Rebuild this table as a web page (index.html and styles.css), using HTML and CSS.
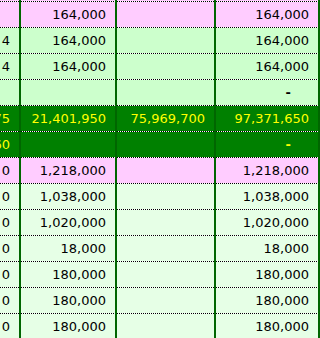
FILE: index.html
```html
<!DOCTYPE html>
<html>
<head>
<meta charset="utf-8">
<link rel="stylesheet" href="styles.css">
</head>
<body>
<div class="sheet">
  <div class="row pink edge"><div class="c c0"></div><div class="c c1"></div><div class="c c2"></div><div class="c c3"></div></div>
  <div class="row pink"><div class="c c0"></div><div class="c c1">164,000</div><div class="c c2"></div><div class="c c3">164,000</div></div>
  <div class="row mint"><div class="c c0">4</div><div class="c c1">164,000</div><div class="c c2"></div><div class="c c3">164,000</div></div>
  <div class="row mint"><div class="c c0">4</div><div class="c c1">164,000</div><div class="c c2"></div><div class="c c3">164,000</div></div>
  <div class="row mint"><div class="c c0"></div><div class="c c1"></div><div class="c c2"></div><div class="c c3"><span class="dash">-</span></div></div>
  <div class="row total"><div class="c c0">75,969,775</div><div class="c c1">21,401,950</div><div class="c c2">75,969,700</div><div class="c c3">97,371,650</div></div>
  <div class="row total"><div class="c c0">1,560</div><div class="c c1"></div><div class="c c2"></div><div class="c c3"><span class="dash">-</span></div></div>
  <div class="row pink"><div class="c c0">0</div><div class="c c1">1,218,000</div><div class="c c2"></div><div class="c c3">1,218,000</div></div>
  <div class="row pale"><div class="c c0">0</div><div class="c c1">1,038,000</div><div class="c c2"></div><div class="c c3">1,038,000</div></div>
  <div class="row pale"><div class="c c0">0</div><div class="c c1">1,020,000</div><div class="c c2"></div><div class="c c3">1,020,000</div></div>
  <div class="row pale"><div class="c c0">0</div><div class="c c1">18,000</div><div class="c c2"></div><div class="c c3">18,000</div></div>
  <div class="row pale"><div class="c c0">0</div><div class="c c1">180,000</div><div class="c c2"></div><div class="c c3">180,000</div></div>
  <div class="row pale"><div class="c c0">0</div><div class="c c1">180,000</div><div class="c c2"></div><div class="c c3">180,000</div></div>
  <div class="row pale"><div class="c c0">0</div><div class="c c1">180,000</div><div class="c c2"></div><div class="c c3">180,000</div></div>
</div>
</body>
</html>
```
FILE: styles.css
```css
html, body {
  margin: 0;
  padding: 0;
  background: #fff;
}
.sheet {
  width: 320px;
  height: 338px;
  overflow: hidden;
  font-family: "DejaVu Sans", Verdana, sans-serif;
  font-size: 13px;
}
.row {
  display: grid;
  grid-template-columns: 21px 96px 99px 104px;
  height: 26px;
}
.row.edge {
  height: 2px;
}
.c {
  --bg: #fff;
  display: flex;
  align-items: center;
  justify-content: flex-end;
  overflow: hidden;
  white-space: nowrap;
  padding: 0 9px 1px 0;
  border-right: 2px solid #006600;
  background:
    repeating-linear-gradient(90deg, #000 0 1px, #fff 1px 2px) left bottom / 100% 1px no-repeat,
    var(--bg);
  line-height: 1;
}
.dash {
  font-weight: bold;
  margin-right: 18px;
}
.pink .c { --bg: #ffccff; color: #000; }
.mint .c { --bg: #ccffcc; color: #000; }
.pale .c { --bg: #e6ffe6; color: #000; }
.total .c { --bg: #008000; color: #ffff00; }
```
